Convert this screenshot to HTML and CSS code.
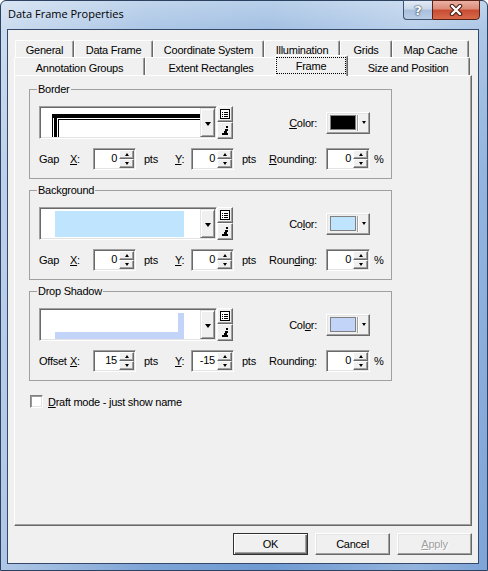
FILE: index.html
```html
<!DOCTYPE html>
<html lang="en">
<head>
    <meta charset="UTF-8">
    <title>Data Frame Properties</title>
    <link rel="stylesheet" href="styles.css">
</head>
<body>

<div class="window">
    <div class="titlebar">
        <span class="title">Data Frame Properties</span>
        <div class="caption">
            <div class="cap-btn help">?</div>
            <div class="cap-btn close">
                <svg width="14" height="12" viewBox="0 0 14 12">
                    <path d="M3 2l8 8M11 2l-8 8" stroke="#4a1d14" stroke-width="4.5" stroke-linecap="round"/>
                    <path d="M3 2l8 8M11 2l-8 8" stroke="#fff" stroke-width="2.4" stroke-linecap="round"/>
                </svg>
            </div>
        </div>
    </div>

    <div class="client">
        <div class="tabs">
            <div class="tab-row back">
                <div class="tab t-general">General</div>
                <div class="tab t-dataframe">Data Frame</div>
                <div class="tab t-coord">Coordinate System</div>
                <div class="tab t-illum">Illumination</div>
                <div class="tab t-grids">Grids</div>
                <div class="tab t-cache">Map Cache</div>
            </div>
            <div class="tab-row front">
                <div class="tab t-annot">Annotation Groups</div>
                <div class="tab t-extent">Extent Rectangles</div>
                <div class="tab t-frame active"><span class="focus">Frame</span></div>
                <div class="tab t-size">Size and Position</div>
            </div>
        </div>

        <div class="page">
            <!-- Border -->
            <fieldset class="group">
                <legend>Border</legend>
                <div class="grp-body">
                    <div class="symbol">
                        <div class="combo">
                            <div class="preview">
                                <svg width="159" height="29" shape-rendering="crispEdges">
                                    <path d="M11.5 29V6.5H159" stroke="#000" fill="none"/>
                                    <rect x="11" y="6" width="148" height="4" fill="#000"/>
                                    <rect x="13" y="6" width="3" height="23" fill="#000"/>
                                    <path d="M17.5 29V11.5H159" stroke="#000" fill="none"/>
                                </svg>
                            </div>
                            <div class="drop"><i class="tri-down"></i></div>
                        </div>
                        <div class="side-btns">
                            <div class="mini">
                                <svg width="10" height="10" shape-rendering="crispEdges">
                                    <rect x="0.5" y="0.5" width="9" height="9" fill="#fff" stroke="#000"/>
                                    <path d="M2 3.5h1M4 3.5h4M2 5.5h1M4 5.5h4M2 7.5h1M4 7.5h4" stroke="#000"/>
                                </svg>
                            </div>
                            <div class="mini">
                                <svg width="7" height="9" shape-rendering="crispEdges">
                                    <rect x="4" y="0" width="2" height="2" fill="#000"/>
                                    <path d="M3 3h3L5 7h1v2H0V7h2l1-3H2z" fill="#000"/>
                                </svg>
                            </div>
                        </div>
                    </div>
                    <span class="color-lbl"><u>C</u>olor:</span>
                    <div class="color-btn">
                        <span class="swatch black"></span>
                        <span class="sep"></span>
                        <i class="tri-small"></i>
                    </div>

                    <span>Gap</span>
                    <span><u>X</u>:</span>
                    <div class="spin"><span class="val">0</span><span class="arrows"><b><i class="up"></i></b><b><i class="dn"></i></b></span></div>
                    <span class="unit">pts</span>
                    <span><u>Y</u>:</span>
                    <div class="spin"><span class="val">0</span><span class="arrows"><b><i class="up"></i></b><b><i class="dn"></i></b></span></div>
                    <span class="unit">pts</span>
                    <span><u>R</u>ounding:</span>
                    <div class="spin"><span class="val">0</span><span class="arrows"><b><i class="up"></i></b><b><i class="dn"></i></b></span></div>
                    <span class="pct">%</span>
                </div>
            </fieldset>

            <!-- Background -->
            <fieldset class="group">
                <legend>Background</legend>
                <div class="grp-body">
                    <div class="symbol">
                        <div class="combo">
                            <div class="preview">
                                <svg width="159" height="29" shape-rendering="crispEdges">
                                    <rect x="14" y="2" width="129" height="26" fill="#bfe4fd"/>
                                </svg>
                            </div>
                            <div class="drop"><i class="tri-down"></i></div>
                        </div>
                        <div class="side-btns">
                            <div class="mini">
                                <svg width="10" height="10" shape-rendering="crispEdges">
                                    <rect x="0.5" y="0.5" width="9" height="9" fill="#fff" stroke="#000"/>
                                    <path d="M2 3.5h1M4 3.5h4M2 5.5h1M4 5.5h4M2 7.5h1M4 7.5h4" stroke="#000"/>
                                </svg>
                            </div>
                            <div class="mini">
                                <svg width="7" height="9" shape-rendering="crispEdges">
                                    <rect x="4" y="0" width="2" height="2" fill="#000"/>
                                    <path d="M3 3h3L5 7h1v2H0V7h2l1-3H2z" fill="#000"/>
                                </svg>
                            </div>
                        </div>
                    </div>
                    <span class="color-lbl">Co<u>l</u>or:</span>
                    <div class="color-btn">
                        <span class="swatch sky"></span>
                        <span class="sep"></span>
                        <i class="tri-small"></i>
                    </div>

                    <span>Gap</span>
                    <span><u>X</u>:</span>
                    <div class="spin"><span class="val">0</span><span class="arrows"><b><i class="up"></i></b><b><i class="dn"></i></b></span></div>
                    <span class="unit">pts</span>
                    <span><u>Y</u>:</span>
                    <div class="spin"><span class="val">0</span><span class="arrows"><b><i class="up"></i></b><b><i class="dn"></i></b></span></div>
                    <span class="unit">pts</span>
                    <span>Roun<u>d</u>ing:</span>
                    <div class="spin"><span class="val">0</span><span class="arrows"><b><i class="up"></i></b><b><i class="dn"></i></b></span></div>
                    <span class="pct">%</span>
                </div>
            </fieldset>

            <!-- Drop Shadow -->
            <fieldset class="group">
                <legend>Drop Shadow</legend>
                <div class="grp-body">
                    <div class="symbol">
                        <div class="combo">
                            <div class="preview">
                                <svg width="159" height="29" shape-rendering="crispEdges">
                                    <rect x="137" y="3" width="6" height="26" fill="#c2d4f8"/>
                                    <rect x="14" y="22" width="129" height="7" fill="#c2d4f8"/>
                                </svg>
                            </div>
                            <div class="drop"><i class="tri-down"></i></div>
                        </div>
                        <div class="side-btns">
                            <div class="mini">
                                <svg width="10" height="10" shape-rendering="crispEdges">
                                    <rect x="0.5" y="0.5" width="9" height="9" fill="#fff" stroke="#000"/>
                                    <path d="M2 3.5h1M4 3.5h4M2 5.5h1M4 5.5h4M2 7.5h1M4 7.5h4" stroke="#000"/>
                                </svg>
                            </div>
                            <div class="mini">
                                <svg width="7" height="9" shape-rendering="crispEdges">
                                    <rect x="4" y="0" width="2" height="2" fill="#000"/>
                                    <path d="M3 3h3L5 7h1v2H0V7h2l1-3H2z" fill="#000"/>
                                </svg>
                            </div>
                        </div>
                    </div>
                    <span class="color-lbl">Col<u>o</u>r:</span>
                    <div class="color-btn">
                        <span class="swatch lav"></span>
                        <span class="sep"></span>
                        <i class="tri-small"></i>
                    </div>

                    <span>Offset</span>
                    <span><u>X</u>:</span>
                    <div class="spin"><span class="val">15</span><span class="arrows"><b><i class="up"></i></b><b><i class="dn"></i></b></span></div>
                    <span class="unit">pts</span>
                    <span><u>Y</u>:</span>
                    <div class="spin"><span class="val">-15</span><span class="arrows"><b><i class="up"></i></b><b><i class="dn"></i></b></span></div>
                    <span class="unit">pts</span>
                    <span>Roundin<u>g</u>:</span>
                    <div class="spin"><span class="val">0</span><span class="arrows"><b><i class="up"></i></b><b><i class="dn"></i></b></span></div>
                    <span class="pct">%</span>
                </div>
            </fieldset>

            <label class="check">
                <span class="box"></span>
                <span><u>D</u>raft mode - just show name</span>
            </label>
        </div>

        <div class="buttons">
            <div class="btn default">OK</div>
            <div class="btn">Cancel</div>
            <div class="btn disabled"><u>A</u>pply</div>
        </div>
    </div>
</div>

</body>
</html>
```

FILE: styles.css
```css
* {
    box-sizing: border-box;
}

body {
    margin: 0;
    width: 488px;
    height: 571px;
    overflow: hidden;
    background: #fff;
    font-family: "Liberation Sans", Arial, sans-serif;
    font-size: 11px;
    letter-spacing: -0.25px;
    color: #000;
}

/* window frame */
.window {
    width: 488px;
    height: 571px;
    display: flex;
    flex-direction: column;
    border: 1px solid #2d4260;
    border-radius: 6px 6px 0 0;
    background:
        linear-gradient(90deg, rgba(255,255,255,0.45) 0%, rgba(255,255,255,0.1) 30%, rgba(255,255,255,0) 55%, rgba(255,255,255,0.25) 85%, rgba(255,255,255,0.1) 100%),
        linear-gradient(180deg, #b9d0ea 0%, #a3c0e3 5%, #86acdb 30%, #6f9ad2 100%);
}

.titlebar {
    height: 28px;
    display: flex;
    align-items: flex-start;
    padding-left: 7px;
}

.title {
    font-family: "Open Sans", "Noto Sans", sans-serif;
    font-size: 11px;
    letter-spacing: 0;
    line-height: 15px;
    padding-top: 5px;
    color: #000;
}

.caption {
    margin-left: auto;
    margin-right: 7px;
    margin-top: -1px;
    display: flex;
}

.cap-btn {
    height: 20px;
    display: flex;
    align-items: center;
    justify-content: center;
}

.help {
    width: 29px;
    border: 1px solid #3e5371;
    border-right: none;
    border-radius: 0 0 0 4px;
    background: linear-gradient(180deg, #e2eaf5 0%, #c9d8ea 45%, #a9bfdc 50%, #b9cde6 100%);
    color: #fff;
    font-family: "DejaVu Sans", sans-serif;
    font-weight: bold;
    font-size: 13px;
    text-shadow: 0 0 2px #1e2d44, 0 0 1px #1e2d44;
}

.close {
    width: 48px;
    border: 1px solid #5b2318;
    border-radius: 0 0 4px 0;
    background: linear-gradient(180deg, #eab1a4 0%, #dc8a77 45%, #c74b31 50%, #d86a4c 100%);
}

/* client area */
.client {
    flex: 1;
    margin: 0 8px 6px 6px;
    border: 1px solid #34496a;
    background: #f0f0f0;
    padding: 10px 6px 8px 6px;
    display: flex;
    flex-direction: column;
}

/* tabs */
.tabs {
    height: 35px;
}

.tab-row {
    display: flex;
}

.tab-row.back {
    height: 17px;
    padding-left: 1px;
}

.tab-row.front {
    height: 18px;
}

.tab {
    height: 100%;
    display: flex;
    align-items: center;
    justify-content: center;
    border-top: 1px solid #fff;
    border-left: 1px solid #fff;
    border-right: 1px solid #696969;
    box-shadow: inset -1px 0 #a0a0a0;
    border-radius: 2px 2px 0 0;
    background: #f0f0f0;
    white-space: nowrap;
}

.tab-row.back .tab {
    padding-top: 1px;
}

.tab-row.front .tab {
    padding-top: 2px;
}

.t-general { width: 59px; }
.t-dataframe { width: 79px; }
.t-coord { width: 111px; }
.t-illum { width: 76px; }
.t-grids { width: 52px; }
.t-cache { width: 77px; }

.t-annot { width: 131px; }
.t-extent { width: 132px; }
.t-frame { width: 73px; }
.t-size { width: 124px; }

.tab.active {
    position: relative;
    z-index: 2;
    height: 21px;
    margin: -2px -2px 0;
    padding: 1px 1px 2px 0;
}

.tab-row.front .tab.active {
    padding-top: 1px;
}

.focus {
    flex: 1;
    height: 100%;
    display: flex;
    align-items: center;
    justify-content: center;
    border: 1px dotted #000;
}

/* page */
.page {
    height: 451px;
    border: 1px solid;
    border-color: #fff #696969 #696969 #fff;
    box-shadow: inset -1px -1px #a0a0a0;
    padding: 7px 0 0 14px;
}

.group {
    width: 363px;
    margin: 0;
    padding: 10px 0 8px 9px;
    border: 1px solid #a0a0a0;
}

.group + .group {
    margin-top: 5px;
}

.group legend {
    padding: 0 1px;
    margin-left: -2px;
    line-height: 13px;
}

.grp-body {
    display: grid;
    grid-template-columns: 31px 23px 43px 39px 16px 43px 35px 57px 44px 1fr;
    grid-template-rows: 33px 22px;
    row-gap: 9px;
    align-items: center;
    white-space: nowrap;
}

.symbol {
    grid-column: 1 / 7;
    display: flex;
    height: 33px;
}

.combo {
    width: 178px;
    height: 33px;
    display: flex;
    padding: 1px;
    border: 1px solid;
    border-color: #a0a0a0 #fff #fff #a0a0a0;
    box-shadow: inset 1px 1px #696969, inset -1px -1px #e3e3e3;
}

.preview {
    width: 159px;
    background: #fff;
    overflow: hidden;
}

.preview svg {
    display: block;
}

.drop {
    width: 15px;
    display: flex;
    align-items: center;
    justify-content: center;
    border: 1px solid;
    border-color: #e3e3e3 #696969 #696969 #e3e3e3;
    box-shadow: inset 1px 1px #fff, inset -1px -1px #a0a0a0;
    background: #f0f0f0;
}

.tri-down {
    display: block;
    width: 0;
    height: 0;
    margin-top: 3px;
    border-top: 4px solid #000;
    border-left: 3.5px solid transparent;
    border-right: 3.5px solid transparent;
}

.side-btns {
    display: flex;
    flex-direction: column;
    width: 16px;
}

.mini {
    height: 16px;
    display: flex;
    align-items: center;
    justify-content: center;
    border: 1px solid;
    border-color: #fff #696969 #696969 #fff;
    box-shadow: inset -1px -1px #a0a0a0;
    background: #f0f0f0;
}

.mini + .mini {
    height: 17px;
}

.mini svg {
    display: block;
}

.color-lbl {
    grid-column: 7 / 9;
    text-align: right;
    padding-right: 9px;
}

.color-btn {
    grid-column: 9 / 11;
    justify-self: start;
    width: 44px;
    height: 22px;
    display: flex;
    align-items: center;
    border: 1px solid;
    border-color: #fff #696969 #696969 #fff;
    box-shadow: inset -1px -1px #a0a0a0, inset 1px 1px #e3e3e3;
    background: #f0f0f0;
}

.swatch {
    width: 26px;
    height: 15px;
    margin-left: 3px;
    border: 1px solid #808080;
}

.swatch.black { background: #000; }
.swatch.sky { background: #bfe4fd; }
.swatch.lav { background: #c2d4f8; }

.sep {
    width: 2px;
    height: 16px;
    margin-left: 1px;
    border-left: 1px solid #a0a0a0;
    border-right: 1px solid #fff;
}

.tri-small {
    display: block;
    width: 0;
    height: 0;
    margin-left: 3px;
    border-top: 3px solid #000;
    border-left: 2.5px solid transparent;
    border-right: 2.5px solid transparent;
}

/* spin boxes */
.spin {
    width: 100%;
    height: 22px;
    display: flex;
    padding: 1px;
    border: 1px solid;
    border-color: #a0a0a0 #fff #fff #a0a0a0;
    box-shadow: inset 1px 1px #696969, inset -1px -1px #e3e3e3;
    background: #fff;
}

.spin .val {
    flex: 1;
    text-align: right;
    padding-right: 2px;
    line-height: 17px;
}

.arrows {
    width: 15px;
    display: flex;
    flex-direction: column;
}

.arrows b {
    flex: 1;
    display: flex;
    align-items: center;
    justify-content: center;
    border: 1px solid;
    border-color: #fff #696969 #696969 #fff;
    box-shadow: inset -1px -1px #a0a0a0;
    background: #f0f0f0;
}

.arrows .up,
.arrows .dn {
    display: block;
    width: 0;
    height: 0;
    border-left: 2.5px solid transparent;
    border-right: 2.5px solid transparent;
}

.arrows .up { border-bottom: 3px solid #000; }
.arrows .dn { border-top: 3px solid #000; }

.unit {
    padding-left: 8px;
}

.pct {
    padding-left: 4px;
}

/* checkbox */
.check {
    display: flex;
    align-items: center;
    margin-top: 14px;
    margin-left: 1px;
}

.check .box {
    width: 13px;
    height: 13px;
    margin-right: 5px;
    background: #fff;
    border: 1px solid;
    border-color: #808080 #fff #fff #808080;
    box-shadow: inset 1px 1px #9a9a9a, inset -1px -1px #e3e3e3;
}

/* dialog buttons */
.buttons {
    display: flex;
    justify-content: flex-end;
    gap: 7px;
    margin-top: 7px;
}

.btn {
    width: 75px;
    height: 22px;
    display: flex;
    align-items: center;
    justify-content: center;
    border: 1px solid;
    border-color: #fff #696969 #696969 #fff;
    box-shadow: inset -1px -1px #a0a0a0, inset 1px 1px #e3e3e3;
    background: #f0f0f0;
}

.btn.default {
    border-color: #303030;
    box-shadow: inset 1px 1px #fff, inset -1px -1px #696969, inset -2px -2px #a0a0a0;
}

.btn.disabled {
    color: #a0a0a0;
    text-shadow: 1px 1px #fff;
}
```
